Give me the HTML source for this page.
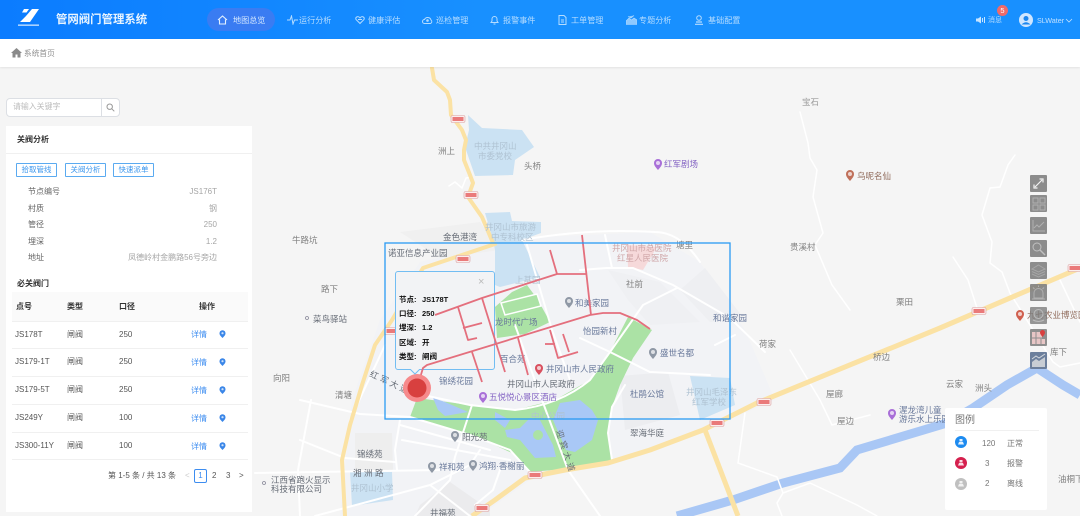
<!DOCTYPE html>
<html lang="zh"><head><meta charset="utf-8"><title>管网阀门管理系统</title>
<style>
*{box-sizing:border-box;margin:0;padding:0}
html,body{width:1080px;height:516px;overflow:hidden;background:#f5f5f5}
body{font-family:"Liberation Sans","Noto Sans CJK SC",sans-serif;position:relative}
#w{position:absolute;left:0;top:0;width:1080px;height:516px;overflow:hidden;filter:blur(.35px)}
.a{position:absolute;white-space:nowrap}
#map,#over{position:absolute;left:0;top:0}
#map text{font-family:"Liberation Sans","Noto Sans CJK SC",sans-serif;font-size:8.5px;fill:#808080}
#map .d{fill:#666c76}#map .b{fill:#68789a}#map .p{fill:#8565c4}#map .l{fill:#afc2d2}#map .k{fill:#cfa6a8}#map .g{fill:#9a9a9a}#map .n{fill:#8f6a5a}
#hd{position:absolute;left:0;top:0;width:1080px;height:39px;background:linear-gradient(90deg,#0b7cff 0,#1890ff 45%,#1890ff 100%)}
.nav{position:absolute;top:15px;font-size:8.1px;line-height:11px;color:#b5dcff}
.ni{position:absolute;top:14px}
#bc{position:absolute;left:0;top:39px;width:1080px;height:28px;background:#fff;box-shadow:0 1px 2px rgba(0,0,0,.08)}
#panel{position:absolute;left:6px;top:126px;width:246px;height:386px;background:#fff}
.btn{position:absolute;top:37px;height:14px;width:41px;border:1px solid #5aaaf0;border-radius:1px;font-size:7.5px;line-height:12px;text-align:center;color:#3a96ee}
.t{position:absolute;font-size:8px;line-height:10px;color:#666;white-space:nowrap}
.v{position:absolute;right:35px;font-size:8px;line-height:10px;color:#a6a6a6;white-space:nowrap}
.ln{position:absolute;left:6px;width:236px;height:1px;background:#f0f0f0}
.c{position:absolute;font-size:8px;line-height:10px;color:#555;white-space:nowrap}
.h{position:absolute;font-size:8px;line-height:10px;color:#333;font-weight:bold;top:176px;white-space:nowrap}
.dt{position:absolute;left:185px;font-size:8px;line-height:10px;color:#3d8df0}
.tool{position:absolute;left:1030px;width:17px;height:17px;background:rgba(130,130,130,.92);border-radius:1px}
.tool svg{display:block}
#popbg{position:absolute;left:395px;top:271px;width:100px;height:99px;background:#f2f3f5;border:1px solid #72bdf2;border-radius:3px}
#pop{position:absolute;left:395px;top:271px;width:100px;height:99px}
.pk{position:absolute;left:4px;font-size:7.5px;line-height:10px;color:#111;font-weight:bold;white-space:nowrap}
.pv{position:absolute;left:27px;font-size:7.5px;line-height:10px;color:#111;font-weight:bold;white-space:nowrap}
#lg{position:absolute;left:945px;top:408px;width:102px;height:102px;background:#fff;border-radius:2px}
.lt{position:absolute;font-size:8px;line-height:10px;color:#777;white-space:nowrap}
</style></head><body><div id="w">

<svg id="map" width="1080" height="516" viewBox="0 0 1080 516">
<defs>
<g id="pin"><path d="M0 4C-2.500 1-4-.5-4-3A4 4 0 1 1 4-3C4-.5 2.500 1 0 4Z"/><circle cx="0" cy="-3" r="2" fill="#fff" opacity=".7"/></g>
<g id="sh"><rect x="-7" y="-3.500" width="14" height="7" rx="1.500" fill="#fbeeee" stroke="#d9a0a0" stroke-width=".6"/><rect x="-5.500" y="-2" width="11" height="4" fill="#ea7a7a"/></g>
</defs>
<rect width="1080" height="516" fill="#f5f5f5"/>
<!-- town areas -->
<path d="M420 262L520 238 650 232 700 262 745 330 775 400 700 432 620 462 530 480 480 516 370 516 340 516 352 400 380 320Z" fill="#f2f3f6"/>
<path d="M400 232L480 222 500 250 440 258Z" fill="#f0f0f0"/>
<path d="M608 270L660 282 700 322 650 325 628 300Z" fill="#eff0f3"/>
<path d="M680 290L705 268 745 320 710 322Z" fill="#eeeff2"/>
<path d="M620 376L668 372 680 415 625 430Z" fill="#ecedf0"/>
<path d="M355 433L392 433 393 470 355 470Z" fill="#eeeeee"/>
<path d="M420 505L450 482 490 510 490 516 415 516Z" fill="#ebebed"/>
<!-- water light -->
<path d="M468 115L482 128 522 130 534 147 515 160 513 175 475 176 465 147 469 130Z" fill="#cbe2f3"/>
<path d="M485 213L510 212 512 221 541 222 541 233 522 240 540 277 500 287 495 285 495 250 493 240Z" fill="#cbe2f3"/>
<path d="M690 376L730 378 735 405 700 420Z" fill="#cbe2f3"/>
<path d="M350 472L392 472 393 500 352 506Z" fill="#cbe2f3"/>
<path d="M627 245L657 247 643 270 628 267Z" fill="#f6d9da"/>
<!-- parks -->
<path d="M410 417L417 398 470 405 515 410 555 400 590 380 610 352 628 317 652 330 633 358 620 385 612 407 608 433 612 460 565 469 530 472 512 453 488 442Z" fill="#abe2a5"/>
<path d="M512 292L527 285 538 300 550 322 525 334 497 338 495 307Z" fill="#abe2a5"/>
<path d="M501 303L537 294 541 306 505 315Z" fill="#abe2a5" stroke="#fff" stroke-width="1.500"/>
<!-- lakes -->
<path d="M530 418L540 420 553 445 556 457 535 458 520 440 507 437 505 430 520 428Z" fill="#a9c8f6"/>
<path d="M560 403L580 400 592 410 598 420 592 440 575 452 566 450 553 420Z" fill="#a9c8f6"/>
<circle cx="538" cy="435" r="5" fill="#abe2a5"/>
<path d="M433 398L445 402 468 412 445 416 438 410Z" fill="#a9c8f6"/>
<path d="M495 412L510 420 505 428 495 420Z" fill="#a9c8f6"/>
<!-- river -->
<path d="M677 516L733 500 783 483 840 468 857 450 947 423 973 408 1007 385 1037 368 1063 385 1080 395" fill="none" stroke="#a9c7f5" stroke-width="9"/>
<!-- white roads -->
<g fill="none" stroke="#fff" stroke-width="1.500" stroke-linecap="round">
<path d="M800 112L808 143 810 158 817 170 813 197 823 233 815 245 832 285 850 310"/>
<path d="M1015 155L1008 165 1000 187 990 188 982 215 992 242 990 263 1002 272 1010 293 1053 362 1060 367 1080 363"/>
<path d="M953 257L968 280 977 308"/><path d="M1060 280L1080 322"/>
<path d="M745 413L738 463 777 477 783 493 777 503 782 516"/><path d="M783 493L810 483 857 505 877 516"/>
<path d="M790 350L820 400 832 425 870 415"/>
<path d="M449 186L455 182 462 188 466 178 472 177"/>
</g>
<g fill="none" stroke="#fff" stroke-width="2" stroke-linecap="round">
<path d="M522 240Q590 228 655 232 680 232 700 262"/>
<path d="M527 245L552 330 570 380"/>
<path d="M515 325L542 400 568 470 600 516"/>
<path d="M580 270L607 268 633 268 673 285 730 318 765 352"/>
<path d="M605 235L612 268"/>
<path d="M677 288L643 305 610 352"/>
<path d="M423 395L470 405 515 410Q560 405 590 380L610 352"/>
<path d="M580 338L610 352 650 372 710 375"/>
<path d="M612 460L608 433 612 407 625 385"/>
<path d="M715 345L735 335"/>
<path d="M410 417L470 435 510 450 530 472"/>
<path d="M300 400L360 414 410 417"/>
<path d="M300 440L345 458 395 462"/>
<path d="M311 400L298 470 300 516"/>
<path d="M255 473L440 470"/>
<path d="M315 516L430 485 470 465 480 450"/>
<path d="M430 485L470 516"/>
<path d="M472 405L455 457 450 480 415 516"/>
<path d="M400 420L395 450 397 470"/>
<path d="M402 440L510 460"/>
<path d="M400 425L490 450"/>
<path d="M500 470L493 490 475 505"/>
<path d="M385 345L350 420"/>
</g>
<!-- yellow roads -->
<g fill="none" stroke="#fbe2a4" stroke-width="4" stroke-linejoin="round" stroke-linecap="round">
<path d="M432 68L434 80 447 92 450 100 451 115 462 130 466 140 464 150 464 160 470 175 473 183 468 197 482 217 493 243"/>
<path d="M495 244L423 268 392 320 375 345 362 385 350 425 342 460 345 516"/>
</g>
<g fill="none" stroke="#fbe2a4" stroke-width="5" stroke-linejoin="round">
<path d="M472 516L495 500 525 478 565 470 608 463 650 450 703 430 757 403 940 328 1080 268"/>
<path d="M705 430L738 516"/>
</g>
<!-- shields -->
<use href="#sh" x="458" y="119"/><use href="#sh" x="471" y="195"/><use href="#sh" x="463" y="259"/><use href="#sh" x="392" y="331"/><use href="#sh" x="717" y="423"/><use href="#sh" x="764" y="402"/><use href="#sh" x="535" y="475"/><use href="#sh" x="482" y="508"/><use href="#sh" x="979" y="311"/><use href="#sh" x="1075" y="268"/>
<!-- pins -->
<use href="#pin" x="658" y="166" fill="#a96fd8"/>
<use href="#pin" x="850" y="177" fill="#c0705a"/>
<use href="#pin" x="569" y="304" fill="#8f98a5"/>
<use href="#pin" x="653" y="355" fill="#8f98a5"/>
<use href="#pin" x="539" y="371" fill="#d9505f"/>
<use href="#pin" x="483" y="399" fill="#a96fd8"/>
<use href="#pin" x="455" y="438" fill="#8f98a5"/>
<use href="#pin" x="432" y="469" fill="#8f98a5"/>
<use href="#pin" x="473" y="467" fill="#8f98a5"/>
<use href="#pin" x="892" y="416" fill="#a96fd8"/>
<use href="#pin" x="1020" y="317" fill="#d0604f"/>
<circle cx="307" cy="318" r="1.500" fill="none" stroke="#889" stroke-width=".8"/><circle cx="264" cy="483" r="1.500" fill="none" stroke="#889" stroke-width=".8"/>
<!-- labels -->
<text class="g" x="802" y="105">宝石</text><text x="438" y="154">洲上</text><text x="524" y="169">头桥</text>
<text class="l" x="474" y="149">中共井冈山</text><text class="l" x="478" y="159">市委党校</text>
<text class="p" x="664" y="167">红军剧场</text><text class="n" x="857" y="179">乌呢名仙</text>
<text class="d" x="443" y="240">金色港湾</text><text class="l" x="485" y="230">井冈山市旅游</text><text class="l" x="491" y="240">中专科校区</text>
<text x="292" y="243">牛路坑</text><text x="321" y="292">路下</text><text class="d" x="313" y="322">菜鸟驿站</text>
<text class="d" x="388" y="256">诺亚信息产业园</text><text class="k" x="612" y="251">井冈山市总医院</text><text class="k" x="617" y="261">红星人民医院</text><text x="676" y="248">塘里</text>
<text class="l" x="515" y="283">上基园</text><text class="b" x="575" y="306">和美家园</text><text x="626" y="287">社前</text><text class="b" x="713" y="321">和谐家园</text>
<text class="b" x="583" y="334">怡园新村</text><text class="b" x="660" y="356">盛世名都</text><text class="b" x="500" y="362">百合苑</text><text class="b" x="495" y="325">龙时代广场</text>
<text class="b" x="546" y="372">井冈山市人民政府</text><text class="d" x="507" y="387">井冈山市人民政府</text><text class="b" x="439" y="384">锦绣花园</text>
<text class="p" x="489" y="400">五悦悦心景区酒店</text><text class="b" x="630" y="397">杜鹃公馆</text><text class="l" x="686" y="395">井冈山毛泽东</text><text class="l" x="692" y="405">红军学校</text><text class="l" x="531" y="419">中心公园</text>
<text x="790" y="250">贵溪村</text><text x="896" y="305">栗田</text><text x="759" y="347">荷家</text><text x="873" y="360">桥边</text><text x="1050" y="355">库下</text><text x="946" y="387">云家</text><text x="975" y="391">洲头</text><text x="826" y="397">屋廊</text><text x="837" y="424">屋边</text>
<text class="b" x="899" y="413">渥龙湾儿童</text><text class="b" x="899" y="422">游乐水上乐园</text><text class="n" x="1027" y="318">九七农业博览园</text>
<text x="273" y="381">向阳</text><text x="335" y="398">清塘</text><text transform="translate(369,376) rotate(25)" class="d" letter-spacing="2.500">红军大道</text>
<text class="d" x="462" y="440">阳光苑</text><text class="d" x="630" y="436">翠海华庭</text><text class="d" x="357" y="457">锦绣苑</text><text class="d" x="353" y="476" letter-spacing="2.500">湘洲路</text>
<text class="b" x="439" y="470">祥和苑</text><text class="b" x="479" y="469">鸿翔·香榭丽</text>
<text class="d" x="271" y="483">江西省跑火显示</text><text class="d" x="271" y="492">科技有限公司</text><text class="l" x="351" y="491">井冈山小学</text><text class="d" x="430" y="516">井福苑</text>
<text transform="translate(556,431) rotate(72)" class="d" letter-spacing="3">迎宾大道</text><text x="1058" y="482">油桐下</text>
</svg>

<div id="popbg"></div>

<svg id="over" width="1080" height="516" viewBox="0 0 1080 516">
<g fill="none" stroke="#e46f7d" stroke-width="1.800" stroke-linejoin="round">
<path d="M435 315L482 298 557 274 586 274"/><path d="M582 235L591 315"/><path d="M550 250L557 274"/>
<path d="M417 388L423 368 427 365 590 315 603 313 620 313 637 320 650 329"/>
<path d="M482 298L505 372"/><path d="M458 307L468 340 477 338"/><path d="M463 328L482 323"/><path d="M472 352L482 382"/><path d="M518 338L528 375"/>
<path d="M550 330L558 358 578 352"/><path d="M545 344L555 344"/><path d="M563 334L569 352"/>
</g>
<rect x="385" y="243" width="345" height="176" fill="none" stroke="#2a9bf4" stroke-width="1.300"/>
<circle cx="417" cy="388" r="14" fill="#f68a8c"/><circle cx="417" cy="388" r="9.500" fill="#d8403f"/>
</svg>

<div id="pop">
<span class="a" style="left:83px;top:5px;font-size:11px;line-height:12px;color:#bbb">×</span>
<span class="pk" style="top:24px">节点:</span><span class="pv" style="top:24px">JS178T</span>
<span class="pk" style="top:38px">口径:</span><span class="pv" style="top:38px">250</span>
<span class="pk" style="top:52px">埋深:</span><span class="pv" style="top:52px">1.2</span>
<span class="pk" style="top:67px">区域:</span><span class="pv" style="top:67px">开</span>
<span class="pk" style="top:81px">类型:</span><span class="pv" style="top:81px">闸阀</span>
</div>
<svg class="a" style="left:410px;top:369px" width="12" height="7"><path d="M0 0L5 5 10 0" fill="#f2f3f5" stroke="#72bdf2" stroke-width="1"/></svg>

<div id="hd">
<svg class="a" style="left:17px;top:8px" width="24" height="20" viewBox="0 0 24 20"><path d="M9 8L15 1H22L13 14H3ZM7 1H12L9.500 4.500H5Z" fill="#fff"/><rect x="1" y="16.500" width="21" height="1.300" fill="#cfe6ff"/></svg>
<span class="a" style="left:56px;top:13px;font-size:11.4px;line-height:14px;font-weight:bold;color:#e8f4ff">管网阀门管理系统</span>
<div class="a" style="left:207px;top:8px;width:68px;height:23px;border-radius:12px;background:#3a7cf2"></div>
<svg class="ni" style="left:217px;top:15px" width="11" height="10" viewBox="0 0 11 10"><path d="M1 5L5.500 1 10 5M2.500 4.500V9H8.500V4.500" fill="none" stroke="#e2f0ff" stroke-width="1.100"/></svg>
<span class="nav" style="left:233px;color:#d6e9ff">地图总览</span>
<svg class="ni" style="left:287px;top:15px" width="11" height="10" viewBox="0 0 11 10"><path d="M0 5H3L4.500 1 6 9 7.500 5H11" fill="none" stroke="#b5dcff" stroke-width="1"/></svg>
<span class="nav" style="left:299px">运行分析</span>
<svg class="ni" style="left:355px;top:15px" width="10" height="10" viewBox="0 0 10 10"><path d="M5 8.500L1 4.500C0 2 3 .5 5 3 7 .5 10 2 9 4.500ZM3 4.500H7" fill="none" stroke="#b5dcff" stroke-width="1"/></svg>
<span class="nav" style="left:368px">健康评估</span>
<svg class="ni" style="left:422px;top:15px" width="11" height="10" viewBox="0 0 11 10"><path d="M2.500 8.500H8.500A2 2 0 0 0 9 5 3.500 3.500 0 0 0 2.500 4.500 2 2 0 0 0 2.500 8.500Z" fill="none" stroke="#b5dcff" stroke-width="1"/><circle cx="5.500" cy="5.500" r="1.300" fill="#b5dcff"/></svg>
<span class="nav" style="left:436px">巡检管理</span>
<svg class="ni" style="left:490px;top:15px" width="9" height="10" viewBox="0 0 9 10"><path d="M1 7.500H8L7 6V4A2.500 2.500 0 0 0 2 4V6ZM3.500 9H5.500" fill="none" stroke="#b5dcff" stroke-width="1"/></svg>
<span class="nav" style="left:503px">报警事件</span>
<svg class="ni" style="left:558px;top:15px" width="9" height="10" viewBox="0 0 9 10"><path d="M1 .5H6L8 2.500V9.500H1ZM3 5H6M3 7H6" fill="none" stroke="#b5dcff" stroke-width="1"/></svg>
<span class="nav" style="left:571px">工单管理</span>
<svg class="ni" style="left:626px;top:15px" width="11" height="10" viewBox="0 0 11 10"><path d="M0 9.500H11V5L8 3 5.500 5 3 3 0 6ZM2 1.500L5 3 8 .5" fill="#b5dcff" stroke="#b5dcff" stroke-width=".6" fill-opacity=".75"/></svg>
<span class="nav" style="left:639px">专题分析</span>
<svg class="ni" style="left:694px;top:15px" width="10" height="10" viewBox="0 0 10 10"><circle cx="5" cy="3" r="2.300" fill="none" stroke="#b5dcff" stroke-width="1"/><path d="M1 9.300H9M2 7H8" stroke="#b5dcff" stroke-width="1.200"/></svg>
<span class="nav" style="left:708px">基础配置</span>
<svg class="ni" style="left:976px;top:16px" width="10" height="8" viewBox="0 0 10 8"><path d="M0 2.500H2L5 .5V7.500L2 5.500H0Z" fill="#c8e4ff"/><path d="M6.500 2V6M8.500 1V7" stroke="#c8e4ff" stroke-width="1"/></svg>
<span class="nav" style="left:988px;font-size:7px">消息</span>
<div class="a" style="left:997px;top:5px;width:11px;height:11px;border-radius:50%;background:#ef6a6a;color:#fff;font-size:7.5px;line-height:11px;text-align:center">5</div>
<svg class="a" style="left:1019px;top:13px" width="14" height="14" viewBox="0 0 14 14"><circle cx="7" cy="7" r="7" fill="#cfe6ff"/><circle cx="7" cy="5.500" r="2.500" fill="#1c86ee"/><path d="M2.500 11.500Q7 7 11.500 11.500" fill="#1c86ee"/></svg>
<span class="nav" style="left:1037px;font-size:7.2px;color:#c0e0ff">SLWater</span>
<svg class="a" style="left:1065px;top:18px" width="8" height="5" viewBox="0 0 8 5"><path d="M1 1L4 4 7 1" fill="none" stroke="#c0e0ff" stroke-width=".8"/></svg>
</div>

<div id="bc">
<svg class="a" style="left:11px;top:9px" width="11" height="10" viewBox="0 0 11 10"><path d="M0 5L5.500 0 11 5 9.500 5V9.500H6.500V6.500H4.500V9.500H1.500V5Z" fill="#8a8a8a"/></svg>
<span class="a" style="left:24px;top:10px;font-size:7.7px;line-height:10px;color:#8f8f8f">系统首页</span>
</div>

<div class="a" style="left:6px;top:98px;width:114px;height:19px;background:#fff;border:1px solid #dcdfe4;border-radius:4px"></div>
<div class="a" style="left:101px;top:98px;width:1px;height:19px;background:#dcdfe4"></div>
<span class="a" style="left:13px;top:102px;font-size:7.9px;line-height:10px;color:#bcbcbc">请输入关键字</span>
<svg class="a" style="left:106px;top:103px" width="9" height="9" viewBox="0 0 9 9"><circle cx="3.700" cy="3.700" r="2.700" fill="none" stroke="#999" stroke-width="1"/><path d="M5.700 5.700L8.300 8.300" stroke="#999" stroke-width="1"/></svg>

<div id="panel">
<span class="a" style="left:11px;top:9px;font-size:8px;line-height:10px;color:#333;font-weight:bold">关阀分析</span>
<div class="ln" style="left:0;width:246px;top:27px"></div>
<div class="btn" style="left:10px">拾取管线</div><div class="btn" style="left:59px">关阀分析</div><div class="btn" style="left:107px">快速派单</div>
<span class="t" style="left:22px;top:61px">节点编号</span><span class="v" style="top:61px">JS176T</span>
<span class="t" style="left:22px;top:78px">村质</span><span class="v" style="top:78px">钢</span>
<span class="t" style="left:22px;top:94px">管径</span><span class="v" style="top:94px">250</span>
<span class="t" style="left:22px;top:111px">埋深</span><span class="v" style="top:111px">1.2</span>
<span class="t" style="left:22px;top:127px">地址</span><span class="v" style="top:127px">凤德岭村金鹏路56号旁边</span>
<span class="a" style="left:11px;top:153px;font-size:8px;line-height:10px;color:#333;font-weight:bold">必关阀门</span>
<div class="a" style="left:6px;top:166px;width:236px;height:29px;background:#fafafa"></div>
<span class="h" style="left:10px;top:176px">点号</span><span class="h" style="left:61px">类型</span><span class="h" style="left:113px">口径</span><span class="h" style="left:193px">操作</span>
<div class="ln" style="top:195px"></div><div class="ln" style="top:222px"></div><div class="ln" style="top:250px"></div><div class="ln" style="top:278px"></div><div class="ln" style="top:306px"></div><div class="ln" style="top:333px"></div>

<span class="c" style="left:9px;top:204px">JS178T</span><span class="c" style="left:61px;top:204px">闸阀</span><span class="c" style="left:113px;top:204px">250</span><span class="dt" style="top:204px">详情</span>
<span class="c" style="left:9px;top:231px">JS179-1T</span><span class="c" style="left:61px;top:231px">闸阀</span><span class="c" style="left:113px;top:231px">250</span><span class="dt" style="top:232px">详情</span>
<span class="c" style="left:9px;top:259px">JS179-5T</span><span class="c" style="left:61px;top:259px">闸阀</span><span class="c" style="left:113px;top:259px">250</span><span class="dt" style="top:260px">详情</span>
<span class="c" style="left:9px;top:287px">JS249Y</span><span class="c" style="left:61px;top:287px">闸阀</span><span class="c" style="left:113px;top:287px">100</span><span class="dt" style="top:288px">详情</span>
<span class="c" style="left:9px;top:315px">JS300-11Y</span><span class="c" style="left:61px;top:315px">闸阀</span><span class="c" style="left:113px;top:315px">100</span><span class="dt" style="top:316px">详情</span>

<svg class="a" style="left:213px;top:204px" width="7" height="8" viewBox="0 0 7 8"><path d="M3.500 8C1 5.500 .5 4.500 .5 3.200A3 3 0 0 1 6.500 3.200C6.500 4.500 6 5.500 3.500 8Z" fill="#3a86e8"/><circle cx="3.500" cy="3.200" r="1.100" fill="#cfe2fa"/></svg>
<svg class="a" style="left:213px;top:232px" width="7" height="8" viewBox="0 0 7 8"><path d="M3.500 8C1 5.500 .5 4.500 .5 3.200A3 3 0 0 1 6.500 3.200C6.500 4.500 6 5.500 3.500 8Z" fill="#3a86e8"/><circle cx="3.500" cy="3.200" r="1.100" fill="#cfe2fa"/></svg>
<svg class="a" style="left:213px;top:260px" width="7" height="8" viewBox="0 0 7 8"><path d="M3.500 8C1 5.500 .5 4.500 .5 3.200A3 3 0 0 1 6.500 3.200C6.500 4.500 6 5.500 3.500 8Z" fill="#3a86e8"/><circle cx="3.500" cy="3.200" r="1.100" fill="#cfe2fa"/></svg>
<svg class="a" style="left:213px;top:288px" width="7" height="8" viewBox="0 0 7 8"><path d="M3.500 8C1 5.500 .5 4.500 .5 3.200A3 3 0 0 1 6.500 3.200C6.500 4.500 6 5.500 3.500 8Z" fill="#3a86e8"/><circle cx="3.500" cy="3.200" r="1.100" fill="#cfe2fa"/></svg>
<svg class="a" style="left:213px;top:316px" width="7" height="8" viewBox="0 0 7 8"><path d="M3.500 8C1 5.500 .5 4.500 .5 3.200A3 3 0 0 1 6.500 3.200C6.500 4.500 6 5.500 3.500 8Z" fill="#3a86e8"/><circle cx="3.500" cy="3.200" r="1.100" fill="#cfe2fa"/></svg>

<span class="a" style="left:102px;top:345px;font-size:8px;line-height:10px;color:#555">第 1-5 条 / 共 13 条</span>
<span class="a" style="left:179px;top:345px;font-size:8px;line-height:10px;color:#ccc">&lt;</span>
<div class="a" style="left:188px;top:343px;width:13px;height:14px;border:1px solid #3d8df0;border-radius:2px;font-size:8px;line-height:12px;text-align:center;color:#3d8df0">1</div>
<span class="a" style="left:206px;top:345px;font-size:8px;line-height:10px;color:#555">2</span>
<span class="a" style="left:220px;top:345px;font-size:8px;line-height:10px;color:#555">3</span>
<span class="a" style="left:233px;top:345px;font-size:8px;line-height:10px;color:#555">&gt;</span>
</div>

<div class="tool" style="top:175px"><svg width="17" height="17" viewBox="0 0 17 17"><path d="M5 12L12 5M9.500 4H13V7.500M4 9.500V13H7.500" fill="none" stroke="#f2f2f2" stroke-width="1.200"/></svg></div>
<div class="tool" style="top:195px"><svg width="17" height="17" viewBox="0 0 17 17"><path d="M3 3H8V8H3ZM10 3H15V8H10ZM3 10H8V15H3ZM10 10H15V15H10Z" fill="none" stroke="#b0b0b0" stroke-width="1"/></svg></div>
<div class="tool" style="top:217px"><svg width="17" height="17" viewBox="0 0 17 17"><path d="M3 3V14H15M4 11L7 8 9 10 14 5" fill="none" stroke="#b0b0b0" stroke-width="1"/></svg></div>
<div class="tool" style="top:240px"><svg width="17" height="17" viewBox="0 0 17 17"><circle cx="7" cy="7" r="4" fill="none" stroke="#c0c0c0" stroke-width="1"/><path d="M10 10L15 15" stroke="#c0c0c0" stroke-width="1.400"/></svg></div>
<div class="tool" style="top:262px"><svg width="17" height="17" viewBox="0 0 17 17"><path d="M8.500 3L15 7 8.500 10 2 7ZM2 9.500L8.500 12.500 15 9.500M2 12L8.500 15 15 12" fill="none" stroke="#a6a6a6" stroke-width="1"/></svg></div>
<div class="tool" style="top:284px"><svg width="17" height="17" viewBox="0 0 17 17"><path d="M4 14V9A4.500 4.500 0 0 1 13 9V14ZM2 15H15M8.500 1.500V3M3 3.500L4.500 5M14 3.500L12.500 5" fill="none" stroke="#b0b0b0" stroke-width="1"/></svg></div>
<div class="tool" style="top:307px;background:rgba(125,125,125,.8)"><svg width="17" height="17" viewBox="0 0 17 17"><circle cx="8.500" cy="7" r="4.500" fill="none" stroke="#bcbcbc" stroke-width="1"/><path d="M3 13Q8.500 16 14 13" fill="none" stroke="#bcbcbc" stroke-width="1"/></svg></div>
<div class="tool" style="top:329px;background:#8f8f8f"><svg width="17" height="17" viewBox="0 0 17 17"><path d="M2 3H12V15H2Z" fill="#e8c6c6"/><path d="M15 15H3V10H15Z" fill="#e8c6c6"/><path d="M6 3V15M2 9H15M11 9V15" stroke="#8f8f8f" stroke-width="1"/><path d="M12.500 8C10.500 5.500 10 4.500 10 3.500A2.500 2.500 0 0 1 15 3.500C15 4.500 14.500 5.500 12.500 8Z" fill="#d9403f"/></svg></div>
<div class="tool" style="top:352px;background:#6c7f9c"><svg width="17" height="17" viewBox="0 0 17 17"><path d="M2 15V10L6 7 9 9 15 5V15Z" fill="#c8cdd4"/><path d="M2 7L6 4 9 6 15 2" fill="none" stroke="#d4d8dd" stroke-width="1"/></svg></div>

<div id="lg">
<span class="a" style="left:10px;top:7px;font-size:10px;line-height:12px;color:#777">图例</span>
<div class="a" style="left:10px;top:22px;width:84px;height:1px;background:#f0f0f0"></div>
<svg class="a" style="left:9px;top:27px" width="14" height="14" viewBox="0 0 14 14"><circle cx="7" cy="7" r="6" fill="#1d8bf0"/><path d="M4 9.500H10L9 7H5ZM5.500 6.500H8.500V4H5.500Z" fill="#e2f1ff"/></svg>
<svg class="a" style="left:9px;top:48px" width="14" height="14" viewBox="0 0 14 14"><circle cx="7" cy="7" r="6" fill="#d5204e"/><path d="M4 9.500H10L9 7H5ZM5.500 6.500H8.500V4H5.500Z" fill="#fbdce4"/></svg>
<svg class="a" style="left:9px;top:69px" width="14" height="14" viewBox="0 0 14 14"><circle cx="7" cy="7" r="6" fill="#c0c0c0"/><path d="M4 9.500H10L9 7H5ZM5.500 6.500H8.500V4H5.500Z" fill="#f2f2f2"/></svg>
<span class="lt" style="left:37px;top:31px">120</span><span class="lt" style="left:62px;top:31px">正常</span>
<span class="lt" style="left:40px;top:51px">3</span><span class="lt" style="left:62px;top:51px">报警</span>
<span class="lt" style="left:40px;top:71px">2</span><span class="lt" style="left:62px;top:71px">离线</span>
</div>
</div></body></html>
